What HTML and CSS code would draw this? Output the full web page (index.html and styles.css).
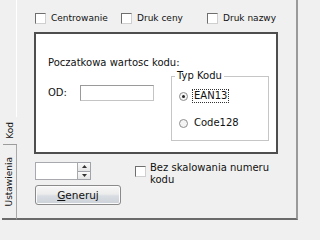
FILE: index.html
```html
<!DOCTYPE html>
<html>
<head>
<meta charset="utf-8">
<link rel="stylesheet" href="styles.css">
</head>
<body>
<div class="window">
  <div class="tabs">
    <div class="tab-fill"></div>
    <div class="tab active"><span class="tab-label">Kod</span></div>
    <div class="tab"><span class="tab-label">Ustawienia</span></div>
  </div>
  <div class="panel">
    <div class="top-row">
      <div class="opt"><span class="cb"></span><span>Centrowanie</span></div>
      <div class="opt"><span class="cb"></span><span>Druk ceny</span></div>
      <div class="opt"><span class="cb"></span><span>Druk nazwy</span></div>
    </div>
    <div class="code-box">
      <div class="title">Poczatkowa wartosc kodu:</div>
      <div class="code-row">
        <div class="od">
          <span class="od-label">OD:</span>
          <span class="input"></span>
        </div>
        <fieldset class="typ">
          <legend>Typ Kodu</legend>
          <div class="radio-row first"><span class="radio checked"><span class="dot"></span></span><span class="rlabel focus">EAN13</span></div>
          <div class="radio-row second"><span class="radio"></span><span class="rlabel">Code128</span></div>
        </fieldset>
      </div>
    </div>
    <div class="bottom-row">
      <div class="controls">
        <div class="spinner">
          <span class="spin-text"></span>
          <span class="spin-btns">
            <span class="spin-btn"><svg width="5" height="3" viewBox="0 0 5 3"><path d="M0 3 L2.5 0 L5 3 Z" fill="#333"/></svg></span>
            <span class="spin-btn"><svg width="5" height="3" viewBox="0 0 5 3"><path d="M0 0 L2.5 3 L5 0 Z" fill="#333"/></svg></span>
          </span>
        </div>
        <button class="btn"><span class="ul">G</span>eneruj</button>
      </div>
      <div class="bez">
        <span class="cb bez-cb"></span>
        <span class="bez-text">Bez skalowania numeru kodu</span>
      </div>
    </div>
  </div>
</div>
</body>
</html>
```

FILE: styles.css
```css
html, body {
  margin: 0;
  padding: 0;
  background: #f0f0f0;
}
body {
  font-family: "DejaVu Sans", Verdana, sans-serif;
  font-size: 10px;
  color: #111;
}
.window {
  width: 300px;
  height: 221px;
  display: flex;
  overflow: hidden;
}
.tabs {
  width: 17px;
  height: 220px;
  display: flex;
  flex-direction: column;
}
.tab-fill {
  flex: 1;
  border-right: 1px solid #ffffff;
}
.tab {
  display: flex;
  align-items: center;
  justify-content: center;
  font-size: 9px;
}
.tab.active {
  height: 27px;
  border-bottom: 1px solid #9c9c9c;
  margin-left: 3px;
}
.tab:not(.active) {
  height: 73px;
  margin-left: 2px;
  border-right: 1px solid #a8a8a8;
  border-bottom: 2px solid #6a6a6a;
}
.tab-label {
  writing-mode: vertical-rl;
  transform: rotate(180deg);
  line-height: 11px;
}
.panel {
  flex: 1;
  height: 220px;
  box-sizing: border-box;
  border-right: 2px solid #9a9a9a;
  border-bottom: 2px solid #6a6a6a;
  padding: 13px 0 0 17px;
  margin-right: 2px;
}
.top-row {
  display: flex;
  height: 11px;
  margin-left: 1px;
  font-size: 9px;
  line-height: 11px;
}
.opt {
  width: 86px;
  display: flex;
  align-items: center;
  gap: 5px;
}
.cb {
  width: 9px;
  height: 9px;
  flex: none;
  background: #fff;
  border: 1px solid;
  border-color: #6e6e6e #cfcfcf #cfcfcf #6e6e6e;
}
.code-box {
  margin-top: 8px;
  width: 244px;
  height: 122px;
  box-sizing: border-box;
  background: #fff;
  border: 2px solid #4e4e4e;
  padding: 23px 0 0 12px;
}
.title {
  line-height: 12px;
  height: 12px;
}
.code-row {
  display: flex;
  align-items: flex-start;
}
.od {
  display: flex;
  align-items: center;
  margin-top: 16px;
}
.od-label {
  width: 32px;
  line-height: 12px;
}
.input {
  width: 72px;
  height: 14px;
  border: 1px solid;
  border-color: #9a9a9a #c4c4c4 #c4c4c4 #9a9a9a;
  background: #fff;
}
.typ {
  margin: 1px 0 0 17px;
  padding: 0;
  width: 98px;
  height: 71px;
  box-sizing: border-box;
  border: 1px solid #c6c6c6;
  min-width: 0;
}
.typ legend {
  padding: 0 2px;
  margin-left: 3px;
  line-height: 12px;
}
.radio-row {
  display: flex;
  align-items: center;
  height: 14px;
  padding-left: 7px;
}
.radio-row.first {
  margin-top: 7px;
}
.radio-row.second {
  margin-top: 13px;
}
.radio {
  width: 7px;
  height: 7px;
  border-radius: 50%;
  border: 1px solid #8e8e8e;
  background: #f4f4f4;
  margin-right: 4px;
  display: flex;
  align-items: center;
  justify-content: center;
  flex: none;
}
.dot {
  width: 3px;
  height: 3px;
  border-radius: 50%;
  background: #222;
}
.rlabel {
  padding: 0 1px;
  border: 1px solid transparent;
  line-height: 12px;
}
.rlabel.focus {
  border: 1px dotted #333;
}
.bottom-row {
  display: flex;
  align-items: flex-start;
}
.controls {
  margin: 8px 0 0 1px;
  width: 86px;
  display: flex;
  flex-direction: column;
}
.spinner {
  display: flex;
  width: 56px;
  height: 18px;
}
.spin-text {
  width: 41px;
  height: 16px;
  background: #fff;
  border: 1px solid #a7a9ae;
}
.spin-btns {
  width: 13px;
  display: flex;
  flex-direction: column;
}
.spin-btn {
  height: 8px;
  border: 1px solid #a0a4aa;
  border-left: none;
  background: linear-gradient(#fafafa, #e4e4e4);
  display: flex;
  align-items: center;
  justify-content: center;
}
.spin-btn + .spin-btn {
  border-top: none;
  height: 8px;
}
.btn {
  margin-top: 5px;
  width: 86px;
  height: 20px;
  padding: 0;
  font-family: "DejaVu Sans", Verdana, sans-serif;
  font-size: 10.5px;
  color: #111;
  border: 1px solid #8a8a8a;
  border-radius: 3px;
  background: linear-gradient(to bottom, #f7f7f7 0%, #ececec 45%, #d9dde3 55%, #ccd2d9 100%);
  box-shadow: inset 0 0 0 1px #fbfbfb;
}
.ul {
  text-decoration: underline;
}
.bez {
  margin: 8px 0 0 14px;
  display: flex;
  align-items: flex-start;
  gap: 4px;
}
.bez-cb {
  margin-top: 4px;
}
.bez-text {
  width: 132px;
  line-height: 12px;
}
```
